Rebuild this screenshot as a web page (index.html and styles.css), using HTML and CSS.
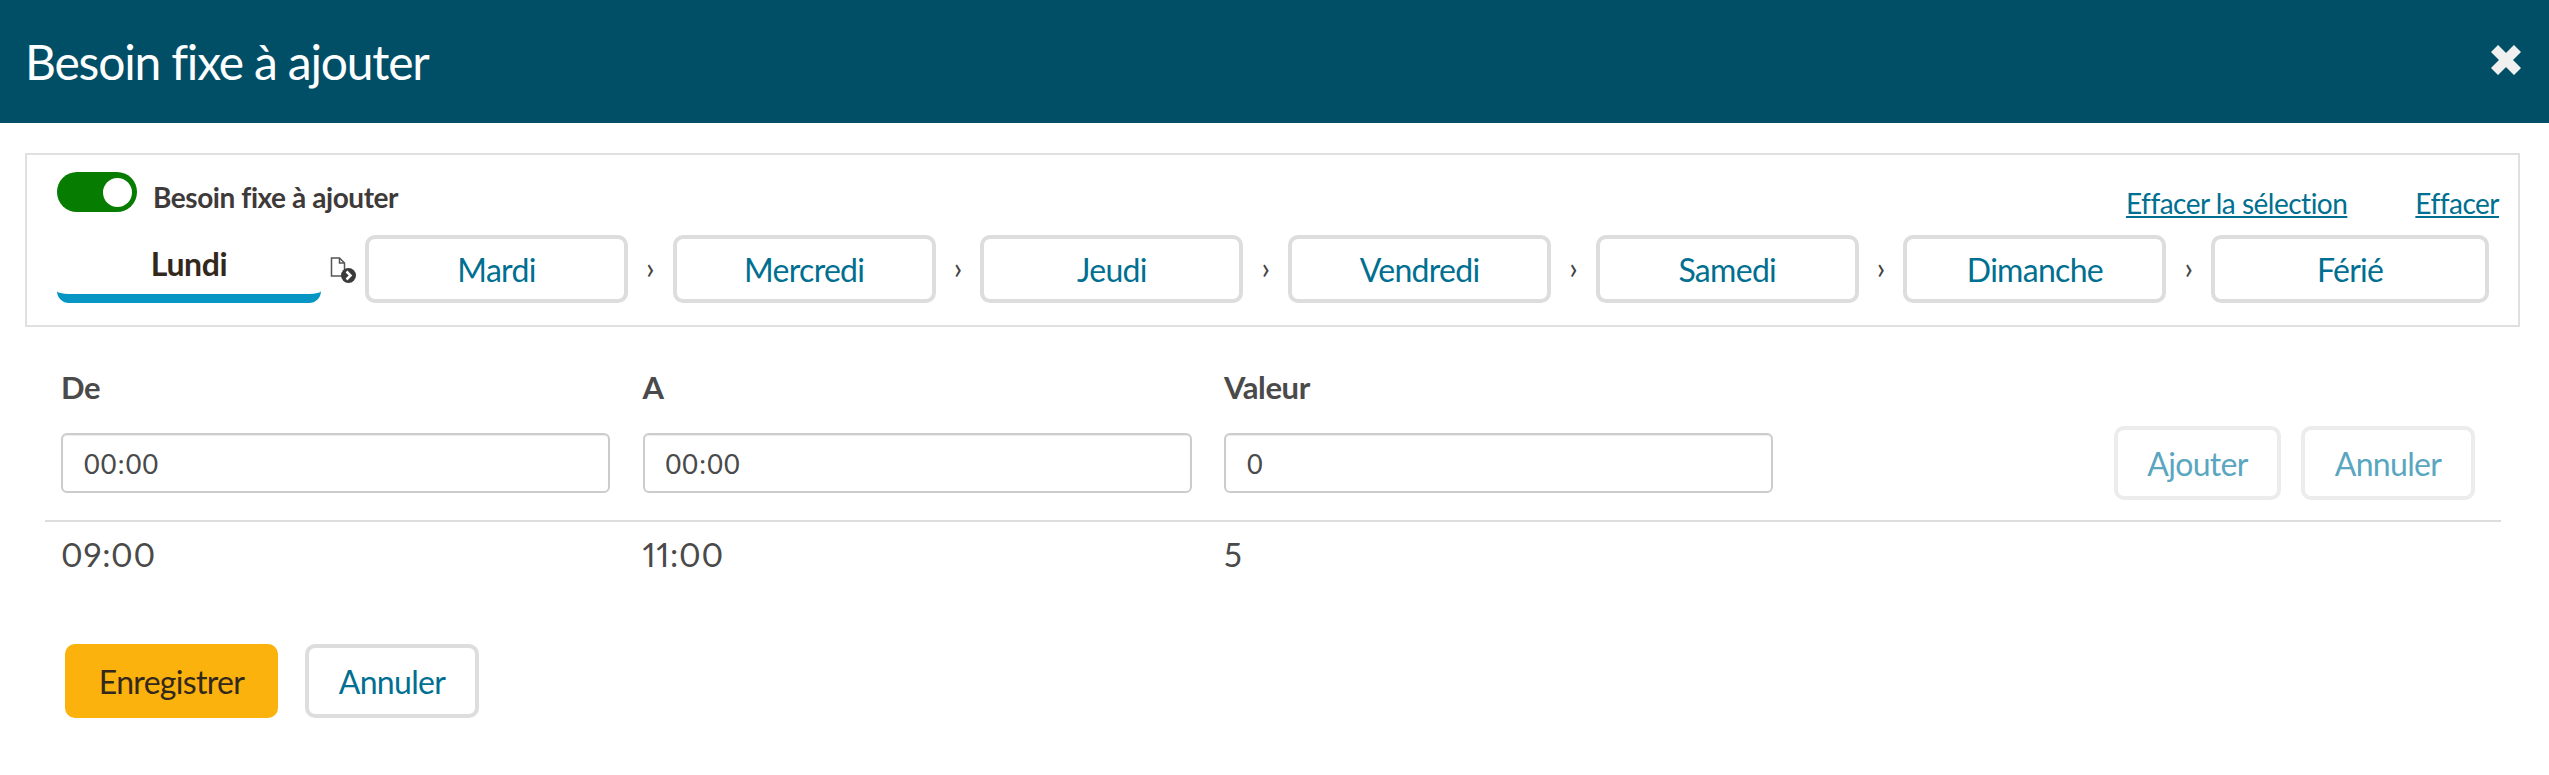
FILE: index.html
```html
<!DOCTYPE html>
<html lang="fr">
<head>
<meta charset="utf-8">
<title>Besoin fixe à ajouter</title>
<link rel="stylesheet" href="styles.css">
</head>
<body>
<header class="topbar">
  <h1 class="title">Besoin fixe à ajouter</h1>
  <svg class="close" viewBox="0 0 30 30" aria-label="Fermer"><path d="M3.500 3.500 26.500 26.500M26.500 3.500 3.500 26.500"/></svg>
</header>
<section class="panel">
  <div class="panel-top">
    <div class="switch-wrap">
      <span class="switch"><span class="knob"></span></span>
      <span class="switch-label">Besoin fixe à ajouter</span>
    </div>
    <div class="links">
      <a class="link link-sel">Effacer la sélection</a>
      <a class="link">Effacer</a>
    </div>
  </div>
  <nav class="days">
    <div class="day-active">Lundi</div>
    <svg class="copy" viewBox="0 0 26 26"><path class="sheet" d="M1.5 1h8l5 5v13h-13z"/><path class="sheet" d="M9.5 1v5h5"/><circle class="dot" cx="18.500" cy="18.500" r="7.500"/><path class="dot-arrow" d="M16.500 14.500l4 4-4 4"/></svg>
    <button class="day">Mardi</button><span class="sep">›</span>
    <button class="day">Mercredi</button><span class="sep">›</span>
    <button class="day">Jeudi</button><span class="sep">›</span>
    <button class="day">Vendredi</button><span class="sep">›</span>
    <button class="day">Samedi</button><span class="sep">›</span>
    <button class="day">Dimanche</button><span class="sep">›</span>
    <button class="day day-last">Férié</button>
  </nav>
</section>
<section class="table">
  <div class="cols head">
    <div>De</div><div>A</div><div>Valeur</div>
  </div>
  <div class="cols entry">
    <input class="field" value="00:00">
    <input class="field" value="00:00">
    <input class="field" value="0">
    <div class="entry-actions">
      <button class="btn btn-off btn-add">Ajouter</button>
      <button class="btn btn-off btn-can">Annuler</button>
    </div>
  </div>
  <div class="cols data">
    <div>09:00</div><div>11:00</div><div>5</div>
  </div>
</section>
<footer class="actions">
  <button class="btn btn-primary">Enregistrer</button>
  <button class="btn btn-plain">Annuler</button>
</footer>
</body>
</html>
```
FILE: styles.css
```css
* { box-sizing: border-box; }
html, body { margin: 0; padding: 0; }
body { background: #fff; font-family: "Lato", "Open Sans", sans-serif; color: #4a4a4a; height: 775px; overflow: hidden; }

.topbar { height: 123px; background: #004f67; display: flex; align-items: center; justify-content: space-between; padding: 0 28px 0 25px; }
.title { margin: 0; font-size: 48px; font-weight: 400; color: #fff; letter-spacing: -1.2px; line-height: 1; }
.close { width: 30px; height: 30px; display: block; margin-top: -3px; }
.close path { stroke: #f0f0f0; stroke-width: 10; fill: none; }

.panel { margin: 30px 29px 0 25px; height: 174px; border: 2px solid #e0e0e0; padding: 17px 0 0 30px; }
.panel-top { display: flex; justify-content: space-between; height: 40px; margin-bottom: 23px; }
.switch-wrap { display: flex; align-items: center; gap: 16px; }
.switch { width: 80px; height: 40px; border-radius: 20px; background: #067d00; display: flex; align-items: center; justify-content: flex-end; padding-right: 5px; }
.knob { width: 29px; height: 29px; border-radius: 50%; background: #fff; }
.switch-label { font-size: 28px; font-weight: 700; color: #3f3a3a; letter-spacing: -.43px; margin-top: 9px; }
.links { display: flex; align-items: flex-end; padding-right: 19px; gap: 68px; height: 47px; }
.link { font-size: 28px; color: #006f91; text-decoration: underline; letter-spacing: -.5px; line-height: 32px; }

.days { display: flex; align-items: stretch; height: 68px; }
.day-active { width: 264px; border-bottom: 9px solid #0795c4; border-radius: 0 0 12px 12px; text-align: center; font-size: 32px; font-weight: 700; color: #33281c; letter-spacing: -.4px; line-height: 58px; }
.copy { width: 26px; height: 26px; margin: 22px 9px 0 9px; flex: none; }
.sheet { fill: none; stroke: #555; stroke-width: 1.500; }
.dot { fill: #3a3a3a; }
.dot-arrow { fill: none; stroke: #fff; stroke-width: 2.500; }
.day { width: 263px; flex: none; background: #fff; border: 4px solid #ddd; border-radius: 10px; font: 400 32px "Lato", sans-serif; color: #006f91; letter-spacing: -.7px; padding: 0; }
.day-last { width: 278px; }
.sep { width: 44.700px; flex: none; text-align: center; font-size: 30px; line-height: 64px; color: #444; }

.table { margin: 40px 48px 0 45px; }
.cols { display: grid; grid-template-columns: 549px 549px 549px 1fr; column-gap: 32.500px; padding-left: 16px; }
.head { font-size: 31px; font-weight: 700; line-height: 40px; letter-spacing: -.4px; }
.entry { margin-top: 19px; height: 96px; padding-bottom: 20px; border-bottom: 2px solid #ddd; align-items: center; }
.field { height: 60px; width: 100%; border: 2px solid #ccc; border-radius: 6px; box-shadow: inset 0 1px 1px rgba(0,0,0,.075); padding: 0 21px; font: 400 27px "Lato", sans-serif; letter-spacing: 1.200px; color: #4a4a4a; outline: none; }
.entry-actions { display: flex; justify-content: flex-end; gap: 20px; padding-right: 26px; }
.data { padding-top: 12px; font-size: 33px; line-height: 40px; letter-spacing: .7px; font-variant-numeric: proportional-nums; }

.btn { height: 74px; border-radius: 10px; font: 400 32px "Lato", sans-serif; letter-spacing: -.7px; padding: 0; background: #fff; }
.btn-off { border: 4px solid #ececec; color: #5aa6c0; }
.btn-add { width: 167px; }
.btn-can { width: 174px; }
.actions { display: flex; gap: 27px; margin: 70px 0 0 65px; }
.btn-primary { width: 213px; background: #fbb20c; border: 0; color: #33281c; }
.btn-plain { width: 174px; border: 4px solid #ddd; color: #006f91; }
```
